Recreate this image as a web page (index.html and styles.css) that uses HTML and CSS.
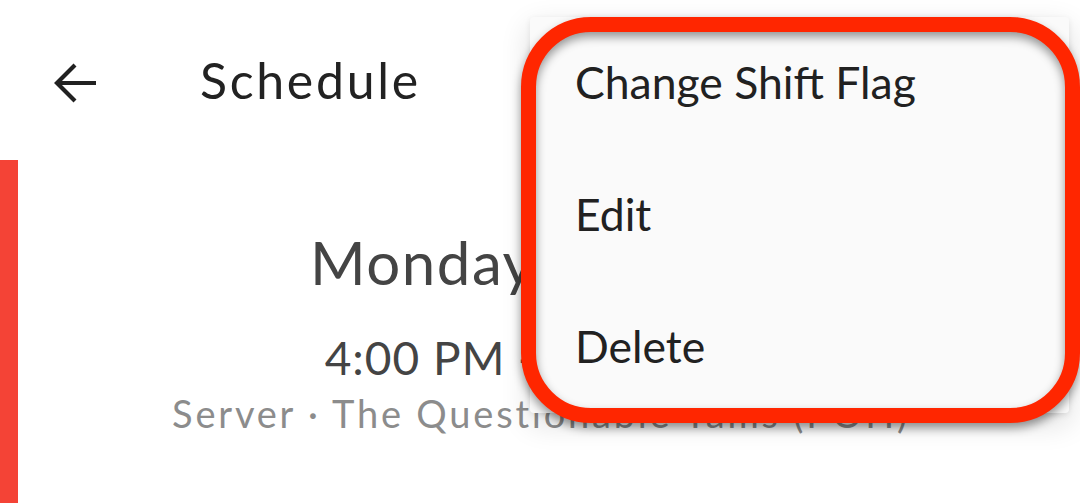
FILE: index.html
```html
<!DOCTYPE html>
<html lang="en">
<head>
<meta charset="utf-8">
<title>Schedule</title>
<link rel="stylesheet" href="styles.css">
</head>
<body>
<div class="app">
  <header class="topbar">
    <svg class="back" width="42" height="42" viewBox="0 0 42 42" aria-hidden="true">
      <path d="M42 21H4M21 3L3 21L21 39" fill="none" stroke="#212121" stroke-width="4.2" stroke-linecap="butt" stroke-linejoin="miter"/>
    </svg>
    <h1 class="title">Schedule</h1>
  </header>
  <main class="main">
    <div class="accent"></div>
    <section class="shift">
      <div class="day">Monday, May 16</div>
      <div class="time">4:00 PM - 10:00 PM</div>
      <div class="place">Server · The Questionable Yams (POH)</div>
    </section>
  </main>
</div>
<div class="menu">
  <div class="menu-item">Change Shift Flag</div>
  <div class="menu-item">Edit</div>
  <div class="menu-item">Delete</div>
</div>
<div class="highlight"></div>
</body>
</html>
```

FILE: styles.css
```css
html, body {
  margin: 0;
  padding: 0;
}
body {
  width: 1080px;
  height: 503px;
  overflow: hidden;
  background: #ffffff;
  font-family: "Lato", "Open Sans", sans-serif;
  position: relative;
}
.app {
  display: flex;
  flex-direction: column;
  height: 503px;
}
.topbar {
  height: 160px;
  box-sizing: border-box;
  padding: 6px 0 0 54px;
  display: flex;
  align-items: center;
}
.back {
  display: block;
  flex: none;
}
.title {
  margin: 0 0 6px 104px;
  font-size: 50px;
  font-weight: 400;
  letter-spacing: 2.7px;
  color: #222222;
  line-height: 1;
}
.main {
  flex: 1;
  display: flex;
}
.accent {
  width: 18px;
  background: #f44336;
  flex: none;
}
.shift {
  flex: 1;
  padding: 66px 16px 0 0;
  text-align: center;
  display: flex;
  flex-direction: column;
  align-items: center;
}
.day {
  font-size: 60px;
  letter-spacing: 1.5px;
  color: #444444;
  line-height: 72px;
  white-space: nowrap;
}
.time {
  margin-top: 32px;
  font-size: 46px;
  letter-spacing: 1px;
  color: #444444;
  line-height: 56px;
  white-space: nowrap;
}
.place {
  margin-top: 4px;
  font-size: 38px;
  letter-spacing: 2.8px;
  color: #8c8c8c;
  line-height: 46px;
  white-space: nowrap;
}
.menu {
  position: absolute;
  left: 530px;
  top: 17px;
  width: 539px;
  background: #fafafa;
  border-radius: 4px;
  box-shadow: 0 10px 30px rgba(0, 0, 0, 0.14), 0 2px 6px rgba(0, 0, 0, 0.08);
  display: flex;
  flex-direction: column;
}
.menu-item {
  height: 132px;
  box-sizing: border-box;
  padding: 0 0 4px 45px;
  display: flex;
  align-items: center;
  font-size: 44.5px;
  color: #212121;
}
.highlight {
  position: absolute;
  left: 521px;
  top: 17px;
  width: 559px;
  height: 406px;
  box-sizing: border-box;
  border: 15px solid #ff2600;
  border-radius: 70px;
  filter: drop-shadow(0 5px 5px rgba(0, 0, 0, 0.4));
}
```
